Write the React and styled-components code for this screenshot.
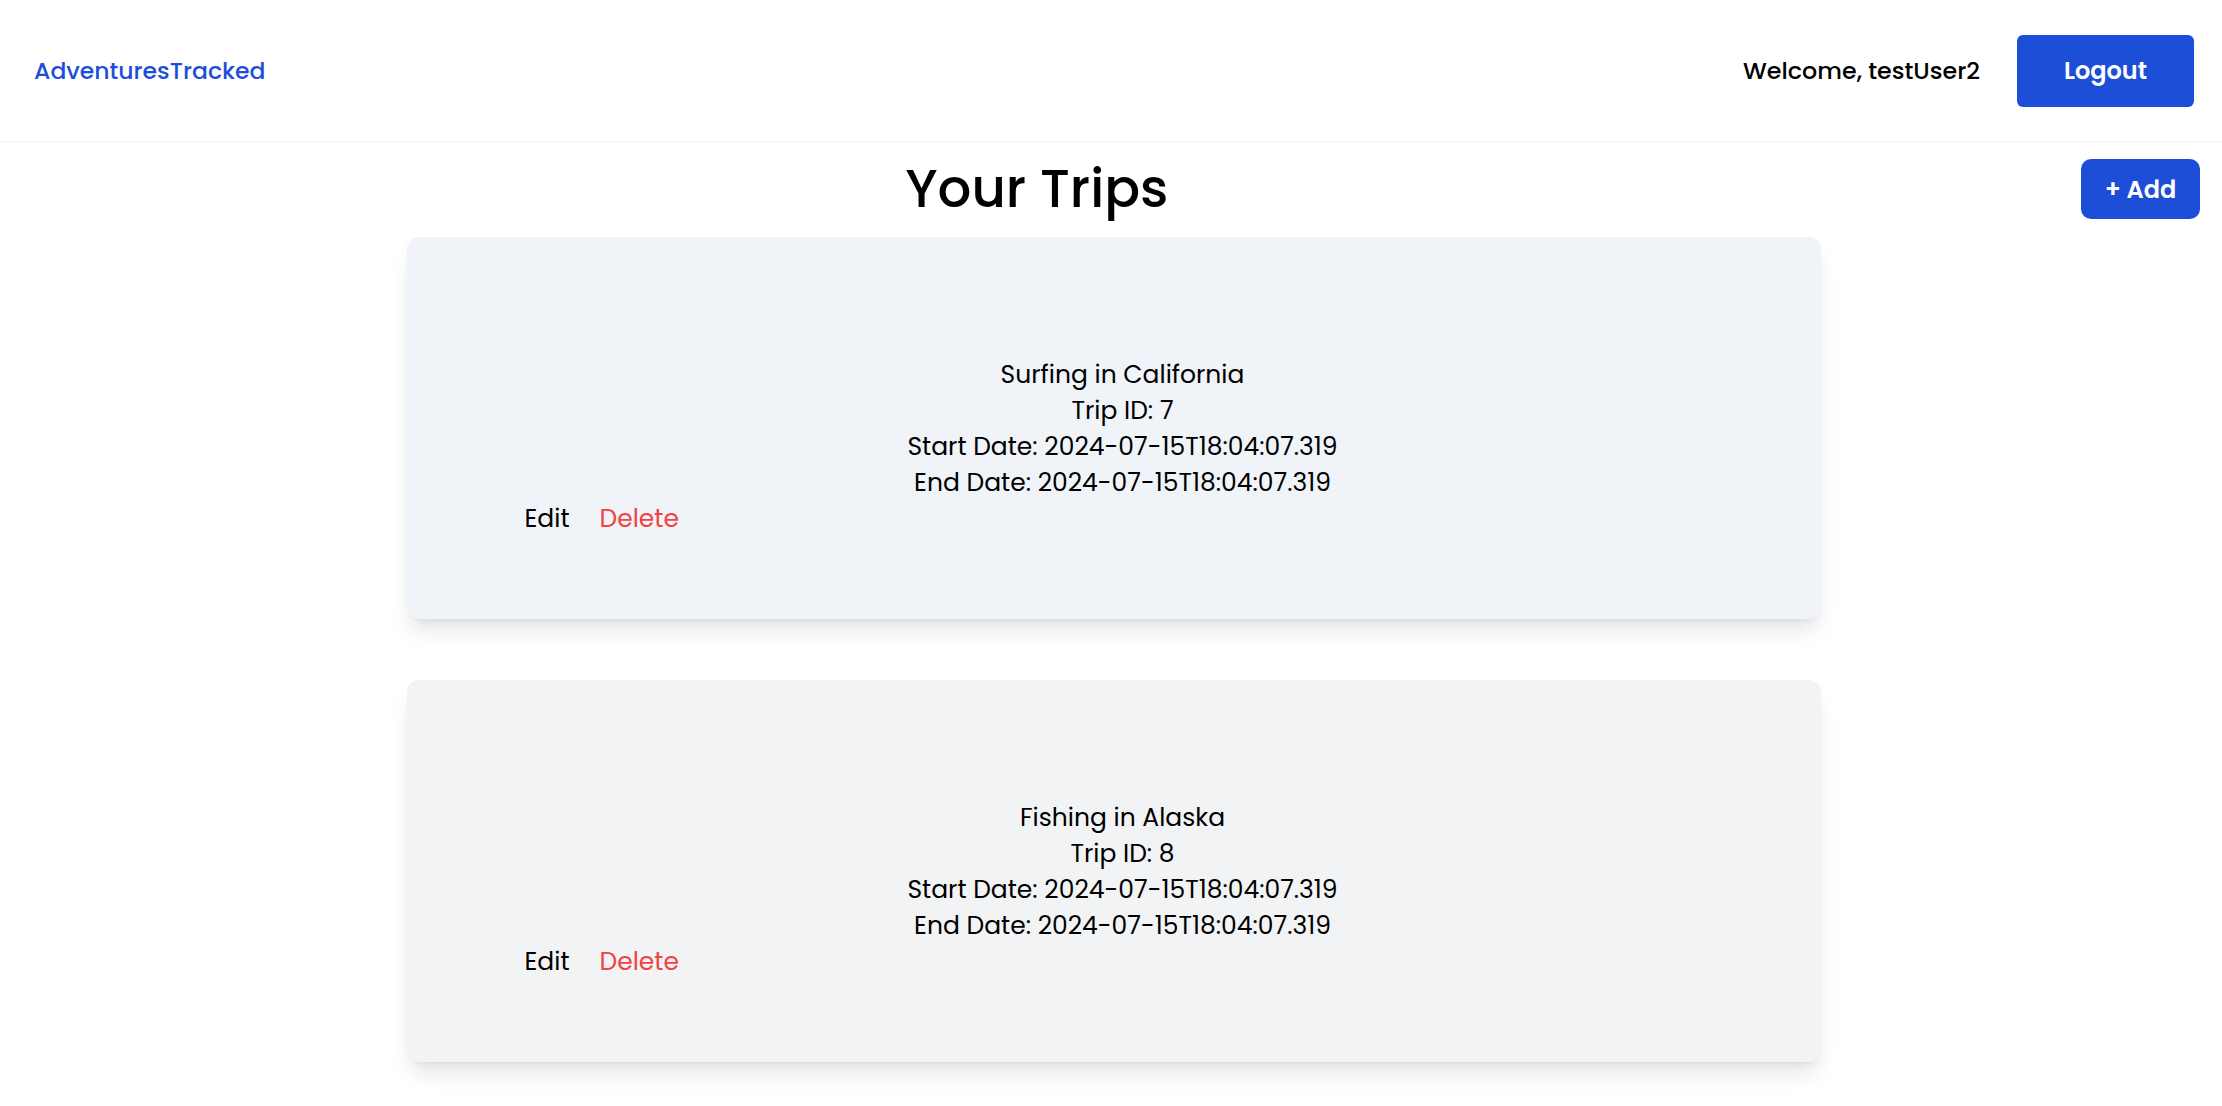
import React from "react";
import styled, { createGlobalStyle } from "styled-components";

const GlobalStyle = createGlobalStyle`
  body {
    margin: 0;
    background: #ffffff;
    font-family: Poppins, "Open Sans", sans-serif;
    color: #000000;
  }
`;

const Header = styled.header`
  height: 141px;
  box-sizing: border-box;
  display: flex;
  align-items: center;
  justify-content: space-between;
  padding: 0 28px 0 34px;
  box-shadow: 0 1px 3px rgba(0, 0, 0, 0.06);
`;

const Logo = styled.a`
  color: #1d4ed8;
  font-size: 23.5px;
  font-weight: 500;
  text-decoration: none;
`;

const UserArea = styled.div`
  display: flex;
  align-items: center;
  gap: 37px;
`;

const Welcome = styled.span`
  font-size: 23.8px;
  font-weight: 500;
`;

const PrimaryButton = styled.button`
  background: #1d4ed8;
  color: #ffffff;
  border: none;
  font-family: inherit;
  font-weight: 600;
  font-size: ${(p) => p.size || 24}px;
  width: ${(p) => p.w}px;
  height: ${(p) => p.h}px;
  border-radius: ${(p) => p.radius}px;
  cursor: pointer;
`;

const TitleRow = styled.div`
  height: 96px;
  display: flex;
  align-items: center;
  padding-right: 22px;
  gap: 7px;
`;

const Title = styled.h1`
  flex: 1;
  margin: 0;
  text-align: center;
  font-size: 53px;
  font-weight: 500;
`;

const CardList = styled.main`
  display: flex;
  flex-direction: column;
  align-items: center;
  gap: 61px;
  padding: 0 0 40px 5px;
`;

const Card = styled.section`
  width: 1414px;
  height: 382px;
  box-sizing: border-box;
  padding-top: 120px;
  background: ${(p) => p.bg};
  border-radius: 12px;
  box-shadow: 0 15px 22px -4px rgba(0, 0, 0, 0.1), 0 6px 9px -6px rgba(0, 0, 0, 0.1);
  font-size: 25px;
  line-height: 36px;
`;

const Details = styled.div`
  text-align: center;
  padding-left: 18px;
`;

const Actions = styled.div`
  display: flex;
  gap: 30px;
  padding-left: 118px;
`;

const LinkButton = styled.button`
  background: none;
  border: none;
  padding: 0;
  font-family: inherit;
  font-size: 25px;
  line-height: 36px;
  color: ${(p) => (p.danger ? "#ef4444" : "#000000")};
  cursor: pointer;
`;

const trips = [
  { id: 7, name: "Surfing in California", bg: "#f0f3f8" },
  { id: 8, name: "Fishing in Alaska", bg: "#f2f3f5" },
];

const date = "2024-07-15T18:04:07.319";

export default function App() {
  return (
    <>
      <GlobalStyle />
      <Header>
        <Logo href="#">AdventuresTracked</Logo>
        <UserArea>
          <Welcome>Welcome, testUser2</Welcome>
          <PrimaryButton w={177} h={72} radius={6}>Logout</PrimaryButton>
        </UserArea>
      </Header>
      <TitleRow>
        <Title>Your Trips</Title>
        <PrimaryButton w={119} h={60} radius={10}>+ Add</PrimaryButton>
      </TitleRow>
      <CardList>
        {trips.map((t) => (
          <Card key={t.id} bg={t.bg}>
            <Details>
              <div>{t.name}</div>
              <div>Trip ID: {t.id}</div>
              <div>Start Date: {date}</div>
              <div>End Date: {date}</div>
            </Details>
            <Actions>
              <LinkButton>Edit</LinkButton>
              <LinkButton danger>Delete</LinkButton>
            </Actions>
          </Card>
        ))}
      </CardList>
    </>
  );
}
